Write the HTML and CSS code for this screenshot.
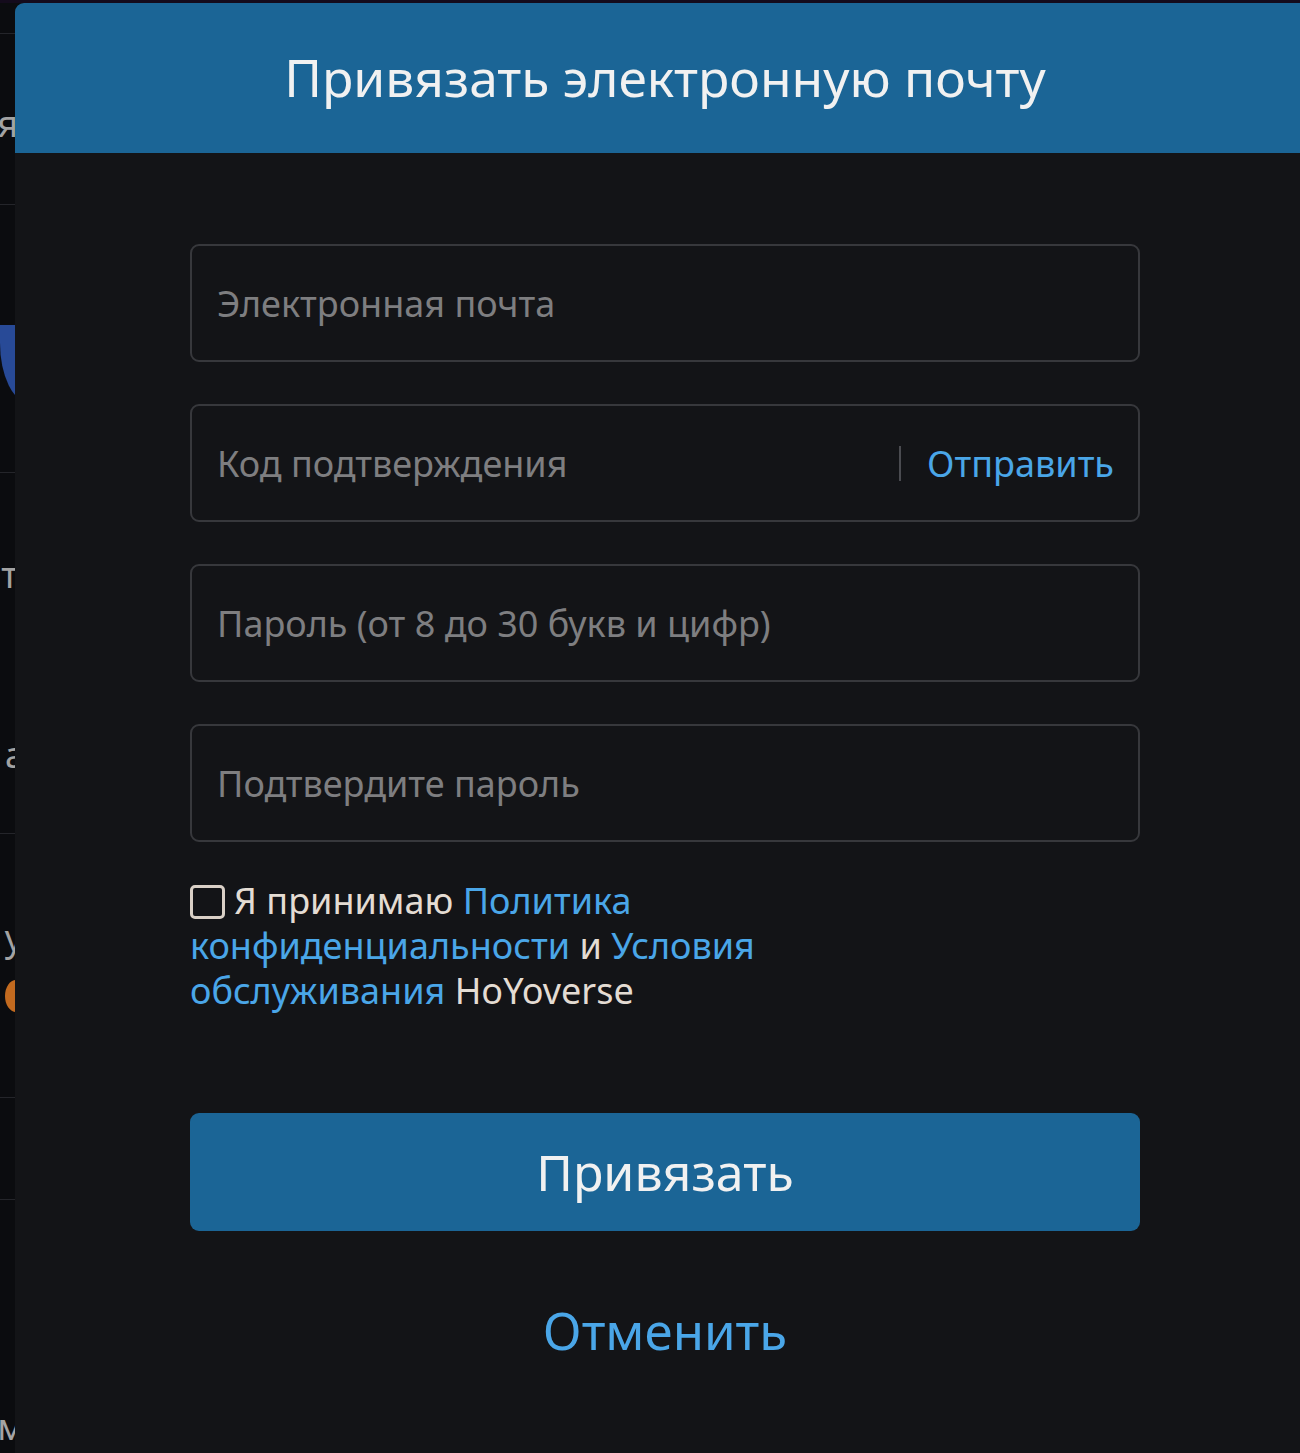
FILE: index.html
```html
<!DOCTYPE html>
<html lang="ru">
<head>
<meta charset="utf-8">
<title>Привязать электронную почту</title>
<link rel="stylesheet" href="styles.css">
</head>
<body>
<div class="page">
  <div class="strip">
    <div class="strip-row r1"></div>
    <div class="strip-row r2"><span class="clip">я</span></div>
    <div class="strip-row r3"><div class="blue-shape"></div></div>
    <div class="strip-row r4"><span class="clip">т</span><span class="clip lower">а</span></div>
    <div class="strip-row r5"><span class="clip">у</span><span class="dot"></span></div>
    <div class="strip-row r6"></div>
    <div class="strip-row r7"><span class="clip">м</span></div>
  </div>
  <div class="modal">
    <div class="modal-header">
      <h1 class="modal-title">Привязать электронную почту</h1>
    </div>
    <div class="modal-body">
      <div class="field">
        <input class="field-input" type="email" placeholder="Электронная почта">
      </div>
      <div class="field">
        <input class="field-input" type="text" placeholder="Код подтверждения">
        <span class="field-sep"></span>
        <button class="send-btn" type="button">Отправить</button>
      </div>
      <div class="field">
        <input class="field-input" type="password" placeholder="Пароль (от 8 до 30 букв и цифр)">
      </div>
      <div class="field">
        <input class="field-input" type="password" placeholder="Подтвердите пароль">
      </div>
      <p class="agree"><span class="checkbox"></span>Я принимаю <a class="link" href="#">Политика<br>конфиденциальности</a> и <a class="link" href="#">Условия<br>обслуживания</a> HoYoverse</p>
      <button class="primary-btn" type="button">Привязать</button>
      <button class="cancel-btn" type="button">Отменить</button>
    </div>
  </div>
</div>
</body>
</html>
```
FILE: styles.css
```css
html, body {
  margin: 0;
  padding: 0;
  background: #0b0c10;
  overflow: hidden;
  height: 1453px;
}
body {
  font-family: "Noto Sans", "Open Sans", sans-serif;
}
.page {
  display: flex;
  height: 1453px;
  background: linear-gradient(#140b1c 0, #140b1c 3px, #0b0c0f 3px);
}
.strip {
  width: 15px;
  flex: 0 0 15px;
  display: flex;
  flex-direction: column;
  overflow: hidden;
  color: #a3a3a3;
  font-size: 36px;
}
.strip-row {
  border-bottom: 1px solid #24252a;
  display: flex;
  flex-direction: column;
  align-items: flex-end;
  overflow: hidden;
}
.clip {
  display: block;
  margin-right: -3px;
  line-height: 40px;
}
.r1 { height: 33px; }
.r2 { height: 171px; padding-top: 70px; box-sizing: border-box; }
.r3 { height: 267px; justify-content: flex-start; }
.blue-shape {
  margin-top: 120px;
  width: 30px;
  height: 78px;
  background: #284a97;
  border-bottom-left-radius: 30px 60px;
  margin-right: -15px;
}
.r4 { height: 361px; padding-top: 82px; box-sizing: border-box; }
.r4 .lower { margin-top: 140px; margin-right: -10px; }
.r5 { height: 264px; padding-top: 84px; box-sizing: border-box; }
.r5 .clip { margin-right: -8px; }
.dot {
  display: block;
  width: 22px;
  height: 32px;
  border-radius: 50%;
  background: #c26a1f;
  margin-right: -12px;
  margin-top: 22px;
}
.r6 { height: 101px; }
.r7 { flex: 1; border-bottom: none; justify-content: flex-end; padding-bottom: 6px; }
.r7 .clip { margin-right: -10px; }

.modal {
  flex: 0 0 1300px;
  width: 1300px;
  margin-top: 3px;
  background: #131417;
  border-top-left-radius: 9px;
  overflow: hidden;
}
.modal-header {
  height: 150px;
  background: #1b6596;
  display: flex;
  align-items: center;
  justify-content: center;
}
.modal-title {
  margin: 0;
  color: #f1f1f1;
  font-weight: 400;
  font-size: 51.5px;
  line-height: 1;
}
.modal-body {
  padding: 91px 160px 0 175px;
  width: 950px;
  display: flex;
  flex-direction: column;
}
.field {
  height: 118px;
  box-sizing: border-box;
  border: 2px solid #37383c;
  border-radius: 9px;
  display: flex;
  align-items: center;
  padding: 0 24px 0 25px;
  margin-bottom: 42px;
}
.field:nth-child(4) { margin-bottom: 36px; }
.field-input {
  flex: 1;
  min-width: 0;
  border: none;
  outline: none;
  background: transparent;
  font-family: inherit;
  font-size: 36px;
  color: #e6e6e6;
  padding: 0;
}
.field-input::placeholder {
  color: #7e7e80;
}
.field-sep {
  width: 2px;
  height: 35px;
  background: #4a4b50;
  margin: 0 26px 0 12px;
}
.send-btn {
  border: none;
  background: none;
  padding: 0;
  font-family: inherit;
  font-size: 36px;
  color: #4aa6e8;
}
.agree {
  margin: 0;
  font-size: 36px;
  line-height: 45px;
  color: #e4dcd3;
}
.checkbox {
  display: inline-block;
  box-sizing: border-box;
  width: 35px;
  height: 34px;
  border: 3px solid #d9d0c6;
  border-radius: 5px;
  vertical-align: -5px;
  margin-right: 9px;
}
.link {
  color: #4aa6e8;
  text-decoration: none;
}
.primary-btn {
  margin-top: 100px;
  height: 118px;
  border: none;
  border-radius: 9px;
  background: #1b6596;
  color: #f1f1f1;
  font-family: inherit;
  font-size: 50px;
  padding: 0;
}
.cancel-btn {
  margin-top: 64px;
  border: none;
  background: none;
  color: #4aa6e8;
  font-family: inherit;
  font-size: 51px;
  padding: 0;
  align-self: center;
}
```
